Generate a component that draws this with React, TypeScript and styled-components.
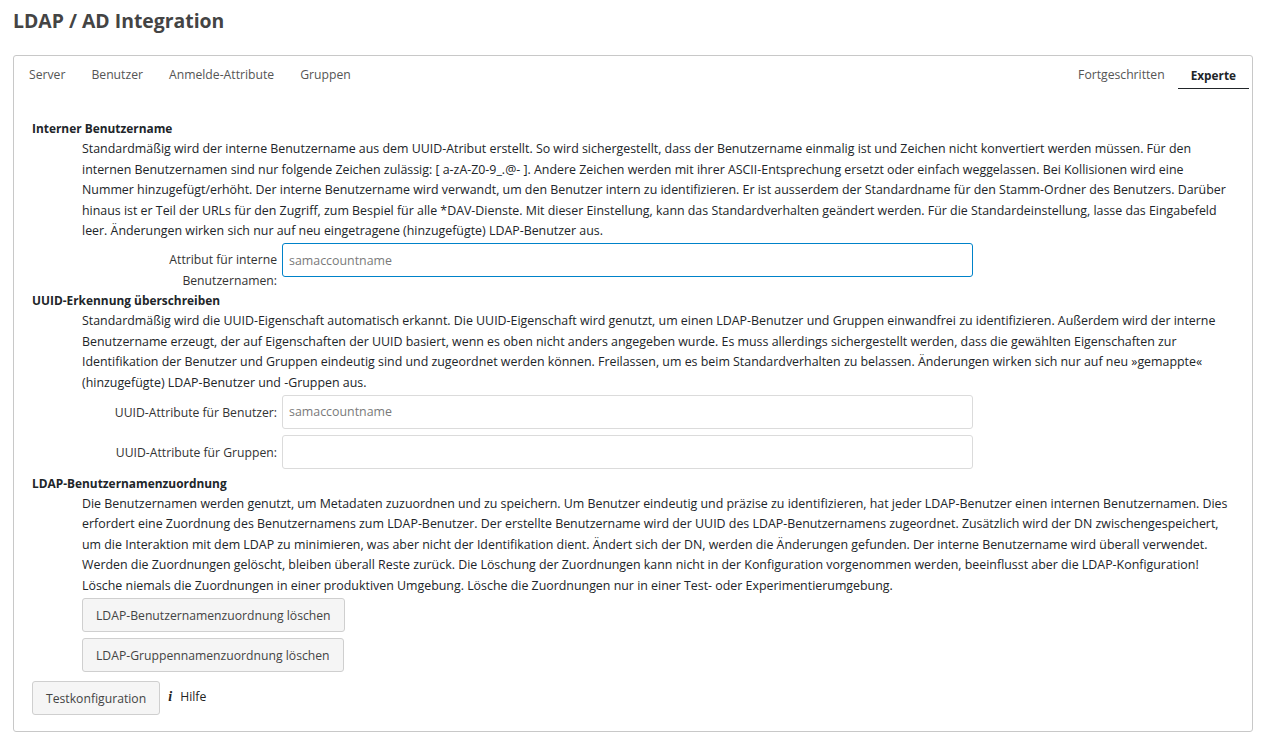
import React from "react";
import styled, { createGlobalStyle } from "styled-components";

const Global = createGlobalStyle`
  html, body { margin: 0; padding: 0; background: #fff; }
  body { font-family: "Open Sans", "Liberation Sans", sans-serif; font-size: 12.2px; line-height: 20.4px; color: #212529; }
  * { box-sizing: border-box; }
`;

const Page = styled.div`
  padding: 0 12px 10px 13px;
`;

const Title = styled.h1`
  margin: 0;
  padding-top: 8px;
  height: 55px;
  font-size: 19.4px;
  line-height: 25px;
  font-weight: 700;
  color: #444;
`;

const Card = styled.div`
  border: 1px solid #c8c8c8;
  border-radius: 3px;
  padding: 0 3px 16px 2px;
  height: 677px;
`;

const Nav = styled.nav`
  display: flex;
  justify-content: space-between;
  height: 33px;
  margin-bottom: 29px;
`;

const TabGroup = styled.div`
  display: flex;
`;

const Tab = styled.a<{ $active?: boolean }>`
  display: block;
  padding: 9px 13px 0;
  height: 33px;
  color: ${(p) => (p.$active ? "#212529" : "#555")};
  font-weight: ${(p) => (p.$active ? 700 : 400)};
  font-size: ${(p) => (p.$active ? "11.8px" : "12.2px")};
  border-bottom: ${(p) => (p.$active ? "1px solid #212529" : "none")};
`;

const Body = styled.div`
  padding: 0 20px 0 16px;
`;

const Heading = styled.div`
  font-weight: 700;
  font-size: 11.9px;
  height: 21px;
`;

const Description = styled.p`
  margin: 0;
  padding-left: 50px;
  font-size: 12.4px;
  line-height: 20.5px;
`;

const Row = styled.div`
  display: flex;
  align-items: flex-start;
  margin-top: 6px;
  p + & { margin-top: 1.5px; }
`;

const Label = styled.label<{ $tall?: boolean }>`
  width: 250px;
  height: ${(p) => (p.$tall ? "47px" : "auto")};
  padding: ${(p) => (p.$tall ? "6px" : "8px")} 5px 0 50px;
  text-align: right;
  color: #333;
  line-height: ${(p) => (p.$tall ? "21px" : "20px")};
`;

const Input = styled.input<{ $focus?: boolean }>`
  width: 691px;
  height: 34px;
  padding: 0 6px;
  font: inherit;
  font-size: 12.4px;
  border: 1px solid ${(p) => (p.$focus ? "#0082c9" : "#dbdbdb")};
  border-radius: 3px;
  outline: none;
  background: #fff;
  color: #222;
  &::placeholder { color: #7a7a7a; opacity: 1; }
`;

const ButtonStack = styled.div`
  display: flex;
  flex-direction: column;
  align-items: flex-start;
  gap: 6px;
  padding-left: 50px;
  margin-top: 1.5px;
`;

const Button = styled.button`
  height: 34px;
  padding: 3px 13px 0;
  font: inherit;
  color: #444;
  background: #f5f5f5;
  border: 1px solid #cfcfcf;
  border-radius: 3px;
`;

const Footer = styled.div`
  display: flex;
  align-items: flex-start;
  margin-top: 9px;
`;

const Help = styled.a`
  display: flex;
  align-items: center;
  margin: 6px 0 0 8px;
  color: #222;
`;

const InfoIcon = styled.i`
  font-family: "Liberation Serif", serif;
  font-weight: 700;
  font-style: italic;
  font-size: 14px;
  width: 12px;
`;

const Section = styled.section``;

const MappingSection = styled.section`
  margin-top: 4px;
`;

export default function App() {
  return (
    <Page>
      <Global />
      <Title>LDAP / AD Integration</Title>
      <Card>
        <Nav>
          <TabGroup>
            <Tab>Server</Tab>
            <Tab>Benutzer</Tab>
            <Tab>Anmelde-Attribute</Tab>
            <Tab>Gruppen</Tab>
          </TabGroup>
          <TabGroup>
            <Tab>Fortgeschritten</Tab>
            <Tab $active>Experte</Tab>
          </TabGroup>
        </Nav>
        <Body>
          <Section>
            <Heading>Interner Benutzername</Heading>
            <Description>
              Standardmäßig wird der interne Benutzername aus dem UUID-Atribut erstellt. So wird sichergestellt, dass der Benutzername einmalig ist und Zeichen nicht konvertiert werden müssen. Für den internen Benutzernamen sind nur folgende Zeichen zulässig: [ a-zA-Z0-9_.@- ]. Andere Zeichen werden mit ihrer ASCII-Entsprechung ersetzt oder einfach weggelassen. Bei Kollisionen wird eine Nummer hinzugefügt/erhöht. Der interne Benutzername wird verwandt, um den Benutzer intern zu identifizieren. Er ist ausserdem der Standardname für den Stamm-Ordner des Benutzers. Darüber hinaus ist er Teil der URLs für den Zugriff, zum Bespiel für alle *DAV-Dienste. Mit dieser Einstellung, kann das Standardverhalten geändert werden. Für die Standardeinstellung, lasse das Eingabefeld leer. Änderungen wirken sich nur auf neu eingetragene (hinzugefügte) LDAP-Benutzer aus.
            </Description>
            <Row>
              <Label $tall>Attribut für interne Benutzernamen:</Label>
              <Input $focus placeholder="samaccountname" />
            </Row>
          </Section>
          <Section>
            <Heading>UUID-Erkennung überschreiben</Heading>
            <Description>
              Standardmäßig wird die UUID-Eigenschaft automatisch erkannt. Die UUID-Eigenschaft wird genutzt, um einen LDAP-Benutzer und Gruppen einwandfrei zu identifizieren. Außerdem wird der interne Benutzername erzeugt, der auf Eigenschaften der UUID basiert, wenn es oben nicht anders angegeben wurde. Es muss allerdings sichergestellt werden, dass die gewählten Eigenschaften zur Identifikation der Benutzer und Gruppen eindeutig sind und zugeordnet werden können. Freilassen, um es beim Standardverhalten zu belassen. Änderungen wirken sich nur auf neu »gemappte« (hinzugefügte) LDAP-Benutzer und -Gruppen aus.
            </Description>
            <Row>
              <Label>UUID-Attribute für Benutzer:</Label>
              <Input placeholder="samaccountname" />
            </Row>
            <Row>
              <Label>UUID-Attribute für Gruppen:</Label>
              <Input />
            </Row>
          </Section>
          <MappingSection>
            <Heading>LDAP-Benutzernamenzuordnung</Heading>
            <Description>
              Die Benutzernamen werden genutzt, um Metadaten zuzuordnen und zu speichern. Um Benutzer eindeutig und präzise zu identifizieren, hat jeder LDAP-Benutzer einen internen Benutzernamen. Dies erfordert eine Zuordnung des Benutzernamens zum LDAP-Benutzer. Der erstellte Benutzername wird der UUID des LDAP-Benutzernamens zugeordnet. Zusätzlich wird der DN zwischengespeichert, um die Interaktion mit dem LDAP zu minimieren, was aber nicht der Identifikation dient. Ändert sich der DN, werden die Änderungen gefunden. Der interne Benutzername wird überall verwendet. Werden die Zuordnungen gelöscht, bleiben überall Reste zurück. Die Löschung der Zuordnungen kann nicht in der Konfiguration vorgenommen werden, beeinflusst aber die LDAP-Konfiguration! Lösche niemals die Zuordnungen in einer produktiven Umgebung. Lösche die Zuordnungen nur in einer Test- oder Experimentierumgebung.
            </Description>
            <ButtonStack>
              <Button>LDAP-Benutzernamenzuordnung löschen</Button>
              <Button>LDAP-Gruppennamenzuordnung löschen</Button>
            </ButtonStack>
          </MappingSection>
          <Footer>
            <Button>Testkonfiguration</Button>
            <Help><InfoIcon>i</InfoIcon>Hilfe</Help>
          </Footer>
        </Body>
      </Card>
    </Page>
  );
}
